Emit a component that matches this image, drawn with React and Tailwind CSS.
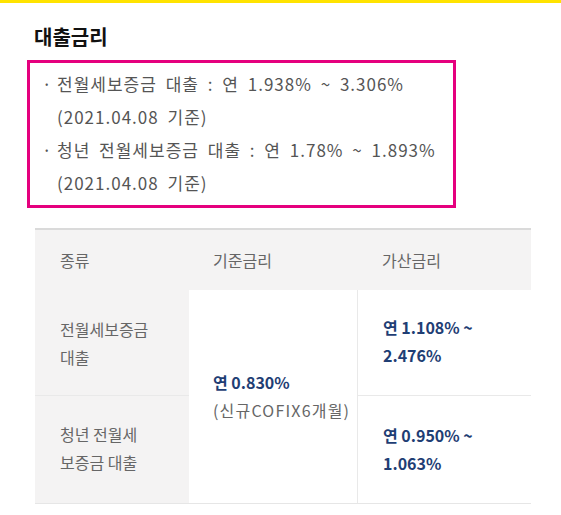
import React from "react";

const rows = [
  {
    type: ["전월세보증금", "대출"],
    extra: ["연 1.108% ~", "2.476%"],
  },
  {
    type: ["청년 전월세", "보증금 대출"],
    extra: ["연 0.950% ~", "1.063%"],
  },
];

const notes = [
  ["전월세보증금 대출 : 연 1.938% ~ 3.306%", "(2021.04.08 기준)"],
  ["청년 전월세보증금 대출 : 연 1.78% ~ 1.893%", "(2021.04.08 기준)"],
];

const App = () => {
  return (
    <div className="w-[561px] h-[515px] overflow-hidden bg-white font-['Noto_Sans_CJK_KR','Noto_Sans',sans-serif]">
      {/* top yellow bar */}
      <div className="h-[3px] bg-[#ffe300]" />

      {/* title */}
      <h2 className="ml-[34px] mt-[20px] text-[20px] leading-[28px] font-bold text-[#111]">
        대출금리
      </h2>

      {/* rate notes */}
      <div className="ml-[27px] mt-[9px] w-[429px] h-[148px] border-[3px] border-[#e5007e] pt-[4px]">
        {notes.map((lines, i) => (
          <div key={i} className="flex text-[17px] tracking-[1px] [word-spacing:4px] leading-[33px] text-[#555]">
            <span className="w-[27px] shrink-0 pl-[12px]">·</span>
            <div>
              {lines.map((l, j) => (
                <div key={j} className="whitespace-nowrap">{l}</div>
              ))}
            </div>
          </div>
        ))}
      </div>

      {/* rate table */}
      <div className="ml-[35px] mt-[20px] w-[496px] border-t-2 border-b border-t-[#dadada] border-b-[#e6e6e6] grid grid-cols-[154px_168px_174px] text-[16px] leading-[28px] text-[#666]">
        <div className="h-[60px] bg-[#f4f3f3] flex items-center pl-[25px]">종류</div>
        <div className="h-[60px] bg-[#f4f3f3] flex items-center pl-[24px]">기준금리</div>
        <div className="h-[60px] bg-[#f4f3f3] flex items-center pl-[25px]">가산금리</div>

        {/* row 1 */}
        <div className="h-[106px] bg-[#f4f3f3] border-b border-[#e9e9e9] flex flex-col justify-center pl-[25px]">
          {rows[0].type.map((t) => (
            <div key={t}>{t}</div>
          ))}
        </div>
        <div className="row-span-2 bg-white flex flex-col justify-center pl-[24px] pb-[2px]">
          <div className="font-bold text-[#1f3e74]">연 0.830%</div>
          <div className="tracking-[1.2px] whitespace-nowrap">(신규COFIX6개월)</div>
        </div>
        <div className="h-[106px] bg-white border-l border-b border-[#e9e9e9] flex flex-col justify-center pl-[25px] pb-[4px] font-bold text-[#1f3e74]">
          {rows[0].extra.map((t) => (
            <div key={t}>{t}</div>
          ))}
        </div>

        {/* row 2 */}
        <div className="h-[107px] bg-[#f4f3f3] flex flex-col justify-center pl-[25px] pb-[4px]">
          {rows[1].type.map((t) => (
            <div key={t}>{t}</div>
          ))}
        </div>
        <div className="h-[107px] bg-white border-l border-[#e9e9e9] flex flex-col justify-center pl-[25px] pb-[2px] font-bold text-[#1f3e74]">
          {rows[1].extra.map((t) => (
            <div key={t}>{t}</div>
          ))}
        </div>
      </div>
    </div>
  );
};

export default App;
